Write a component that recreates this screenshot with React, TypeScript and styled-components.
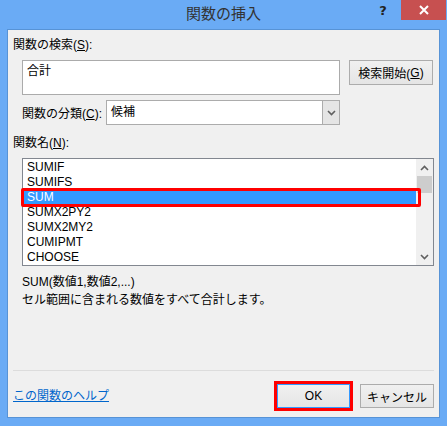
import styled, { createGlobalStyle } from "styled-components";

const GlobalStyle = createGlobalStyle`
    html, body {
        margin: 0;
        padding: 0;
        background: #6aabf5;
    }

    * {
        box-sizing: border-box;
    }
`;

const FUNCTIONS = ["SUMIF", "SUMIFS", "SUM", "SUMX2PY2", "SUMX2MY2", "CUMIPMT", "CHOOSE"];
const SELECTED = "SUM";

const App = () => {
    return (
        <>
            <GlobalStyle />
            <Window>
                <TitleBar>
                    <span />
                    <Title>関数の挿入</Title>
                    <Controls>
                        <HelpButton>?</HelpButton>
                        <CloseButton>
                            <svg width="10" height="10" viewBox="0 0 10 10">
                                <path d="M1 1 L9 9 M9 1 L1 9" stroke="#fff" strokeWidth="2" />
                            </svg>
                        </CloseButton>
                    </Controls>
                </TitleBar>
                <Body>
                    <Label>
                        関数の検索(<u>S</u>):
                    </Label>
                    <SearchRow>
                        <SearchBox>合計</SearchBox>
                        <Button>
                            検索開始(<u>G</u>)
                        </Button>
                    </SearchRow>
                    <CategoryRow>
                        <span>
                            関数の分類(<u>C</u>):
                        </span>
                        <Select>
                            <SelectValue>候補</SelectValue>
                            <SelectArrow>
                                <svg width="9" height="6" viewBox="0 0 9 6">
                                    <path d="M1 1 L4.5 4.5 L8 1" stroke="#606060" strokeWidth="1.6" fill="none" />
                                </svg>
                            </SelectArrow>
                        </Select>
                    </CategoryRow>
                    <ListLabel>
                        関数名(<u>N</u>):
                    </ListLabel>
                    <ListBox>
                        <Items>
                            {FUNCTIONS.map((name) => (
                                <Item key={name} selected={name === SELECTED}>
                                    {name}
                                </Item>
                            ))}
                        </Items>
                        <ScrollBar>
                            <ScrollArrow>
                                <svg width="9" height="6" viewBox="0 0 9 6">
                                    <path d="M1 5 L4.5 1.5 L8 5" stroke="#606060" strokeWidth="1.6" fill="none" />
                                </svg>
                            </ScrollArrow>
                            <ScrollTrack>
                                <ScrollThumb />
                            </ScrollTrack>
                            <ScrollArrow>
                                <svg width="9" height="6" viewBox="0 0 9 6">
                                    <path d="M1 1 L4.5 4.5 L8 1" stroke="#606060" strokeWidth="1.6" fill="none" />
                                </svg>
                            </ScrollArrow>
                        </ScrollBar>
                    </ListBox>
                    <Description>
                        <div>SUM(数値1,数値2,...)</div>
                        <div>セル範囲に含まれる数値をすべて合計します。</div>
                    </Description>
                    <Separator />
                    <Footer>
                        <HelpLink href="#">この関数のヘルプ</HelpLink>
                        <Buttons>
                            <OkButton>OK</OkButton>
                            <FooterButton>キャンセル</FooterButton>
                        </Buttons>
                    </Footer>
                </Body>
            </Window>
        </>
    );
};

const Window = styled.div`
    width: 447px;
    height: 426px;
    background: #6aabf5;
    padding: 0 7px 8px 7px;
    display: flex;
    flex-direction: column;

    font-family: "Liberation Sans", "Noto Sans CJK JP", sans-serif;
    font-size: 12px;
    color: #000;
`;

const TitleBar = styled.div`
    height: 29px;
    display: grid;
    grid-template-columns: 1fr auto 1fr;
    align-items: start;
`;

const Title = styled.div`
    padding-top: 4px;
    font-size: 15px;
    line-height: 20px;
    color: #333;
`;

const Controls = styled.div`
    display: flex;
    justify-content: flex-end;
    align-items: flex-start;
    margin-right: -6px;
`;

const HelpButton = styled.div`
    width: 26px;
    height: 20px;
    display: flex;
    align-items: center;
    justify-content: center;
    font-family: "DejaVu Sans", sans-serif;
    font-weight: bold;
    font-size: 13px;
    color: #222;
    margin-right: 5px;
`;

const CloseButton = styled.div`
    width: 45px;
    height: 20px;
    background: #c75050;
    display: flex;
    align-items: center;
    justify-content: center;
`;

const Body = styled.div`
    flex: 1;
    background: #f0f0f0;
    border: 1px solid #5793d6;
    padding: 7px 5px 9px 5px;
    display: flex;
    flex-direction: column;
`;

const Label = styled.div`
    line-height: 16px;
`;

const SearchRow = styled.div`
    display: flex;
    gap: 9px;
    margin: 7px 0 0 9px;
    align-items: flex-start;
`;

const SearchBox = styled.div`
    width: 318px;
    height: 35px;
    background: #fff;
    border: 1px solid #ababab;
    padding: 2px 4px;
    line-height: 16px;
`;

const Button = styled.div`
    width: 84px;
    height: 25px;
    display: flex;
    align-items: center;
    justify-content: center;
    border: 1px solid #acacac;
    background: linear-gradient(#f0f0f0, #e5e5e5);
`;

const CategoryRow = styled.div`
    width: 318px;
    display: flex;
    align-items: center;
    gap: 4px;
    margin: 5px 0 0 9px;
`;

const Select = styled.div`
    flex: 1;
    height: 25px;
    display: flex;
    background: #fff;
    border: 1px solid #acacac;
`;

const SelectValue = styled.div`
    flex: 1;
    padding: 0 4px;
    line-height: 23px;
`;

const SelectArrow = styled.div`
    width: 17px;
    background: #e5e5e5;
    border-left: 1px solid #acacac;
    display: flex;
    align-items: center;
    justify-content: center;
`;

const ListLabel = styled.div`
    line-height: 16px;
    margin-top: 10px;
`;

const ListBox = styled.div`
    width: 412px;
    height: 108px;
    margin: 7px 0 0 9px;
    border: 1px solid #828790;
    background: #fff;
    display: flex;
    padding: 1px 0 1px 1px;
`;

const Items = styled.div`
    flex: 1;
    display: flex;
    flex-direction: column;
`;

const Item = styled.div<{ selected: boolean }>`
    position: relative;
    height: 15px;
    line-height: 15px;
    padding-left: 3px;
    background: ${(props) => (props.selected ? "#3399ff" : "transparent")};
    color: ${(props) => (props.selected ? "#fff" : "#000")};

    &::after {
        content: "";
        display: ${(props) => (props.selected ? "block" : "none")};
        position: absolute;
        left: -3px;
        right: -5px;
        top: -2px;
        bottom: -2px;
        border: 3px solid #ff0000;
        border-radius: 2px;
    }
`;

const ScrollBar = styled.div`
    width: 17px;
    display: flex;
    flex-direction: column;
    background: #f0f0f0;
    margin: -1px 0;
`;

const ScrollArrow = styled.div`
    height: 17px;
    display: flex;
    align-items: center;
    justify-content: center;
`;

const ScrollTrack = styled.div`
    flex: 1;
    padding: 0 1px;
`;

const ScrollThumb = styled.div`
    height: 17px;
    background: #cdcdcd;
`;

const Description = styled.div`
    margin: 7px 0 0 9px;
    line-height: 18px;
`;

const Separator = styled.div`
    margin-top: auto;
    height: 1px;
    background: #dcdcdc;
`;

const Footer = styled.div`
    display: flex;
    justify-content: space-between;
    align-items: center;
    margin-top: 13px;
`;

const HelpLink = styled.a`
    color: #0066cc;
    text-decoration: underline;
    margin-top: -4px;
`;

const Buttons = styled.div`
    display: flex;
    gap: 10px;
`;

const FooterButton = styled.div`
    width: 74px;
    height: 24px;
    display: flex;
    align-items: center;
    justify-content: center;
    border: 1px solid #acacac;
    background: linear-gradient(#f0f0f0, #e5e5e5);
`;

const OkButton = styled(FooterButton)`
    width: 73px;
    border-color: #3399ff;
    outline: 3px solid #ff0000;
    outline-offset: 0;
`;

export default App;
